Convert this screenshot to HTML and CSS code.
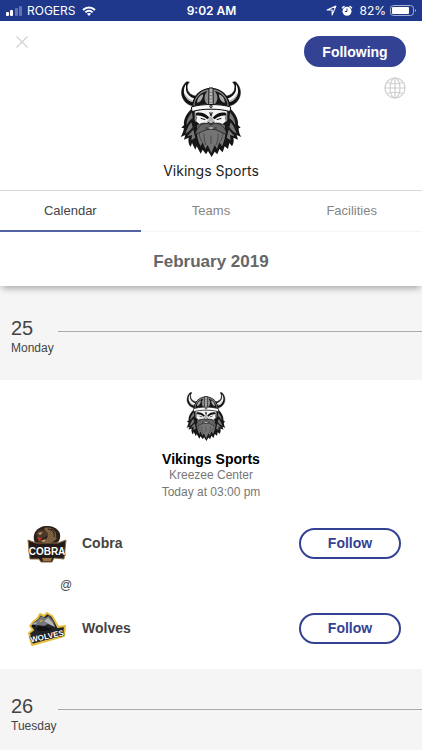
FILE: index.html
```
<!DOCTYPE html>
<html lang="en">

<head>
    <meta charset="UTF-8">
    <meta name="viewport" content="width=device-width, initial-scale=1.0">
    <title>Vikings Sports</title>
    <link rel="stylesheet" href="styles.css">
</head>

<body>
    <svg class="sprite" aria-hidden="true">
        <symbol id="viking" viewBox="60 26 186 228">
            <!-- hair and beard -->
            <path fill="#161616" d="M96 108C80 124 70 140 72 158L64 166L72 168C70 178 66 188 62 194L76 188L72 202L86 196C84 206 86 216 92 224L96 212L106 232L110 222L122 244L128 232L138 246L144 236L155 254L164 238L172 246L178 230L188 240L194 222L204 230L208 212L216 222C222 212 222 204 220 196L234 202L230 188L244 194C238 186 236 176 236 168L242 166L234 158C236 140 226 124 210 108Z" />
            <path fill="#777" d="M96 120C84 134 80 146 80 158C86 150 90 142 98 138ZM210 120C222 134 226 146 226 158C220 150 216 142 208 138ZM94 150C82 164 80 176 76 184C88 178 94 170 98 164ZM212 150C224 164 226 176 230 184C218 178 212 170 208 164ZM100 172L82 192L96 188L94 204L106 196ZM206 172L224 192L210 188L212 204L200 196Z" />
            <path fill="#747474" d="M112 158C108 182 112 202 122 222L128 210L136 230L143 218L154 242L164 218L171 230L178 210L186 222C196 202 198 182 194 158C178 150 162 154 153 160C144 154 128 150 112 158Z" />
            <g fill="none" stroke="#333" stroke-width="2">
                <path d="M118 178C116 188 120 198 126 208M132 184C130 194 134 208 138 218M188 178C190 188 186 198 180 208M174 184C176 194 172 208 168 218M153 190V214M104 162L90 180M202 162L216 180" />
            </g>
            <!-- face -->
            <path fill="#f4f4f4" stroke="#111" stroke-width="2" d="M104 116C120 108 186 108 202 116L200 146L188 156C176 150 164 152 153 158C142 152 130 150 118 156L106 146Z" />
            <path fill="#111" d="M108 122C122 118 138 124 148 136L142 141C130 131 118 128 108 130ZM198 122C184 118 168 124 158 136L164 141C176 131 188 128 198 130Z" />
            <path fill="#8a8a8a" d="M104 118L112 136L108 148L104 144ZM202 118L194 136L198 148L202 144Z" />
            <path fill="#b5b5b5" d="M149 118H157V134L164 148L158 155H148L142 148L149 134Z" />
            <path fill="none" stroke="#111" stroke-width="3" d="M122 138L136 142M184 138L170 142M142 149L153 155L164 149M149 120L153 130L157 120" />
            <path fill="#666" stroke="#111" stroke-width="2" d="M153 158C142 150 124 152 114 166C108 174 108 180 104 186C118 184 130 174 140 172L153 170L166 172C176 174 188 184 202 186C198 180 198 174 192 166C182 152 164 150 153 158Z" />
            <path fill="#eee" stroke="#111" stroke-width="2" d="M137 167Q153 160 169 167Q153 174 137 167Z" />
            <!-- horns -->
            <g stroke="#111" stroke-width="2" stroke-linejoin="round">
                <path fill="#111" d="M80 28C62 44 62 66 70 80C76 92 86 98 98 100L114 72C96 72 84 62 82 50C80 42 82 34 88 30Z" />
                <path fill="#111" d="M226 28C244 44 244 66 236 80C230 92 220 98 208 100L192 72C210 72 222 62 224 50C226 42 224 34 218 30Z" />
            </g>
            <path fill="#f5f5f5" d="M78 36C70 48 70 62 76 72C82 84 90 88 98 89L104 78C92 76 80 66 78 52Z" />
            <path fill="#f5f5f5" d="M228 36C236 48 236 62 230 72C224 84 216 88 208 89L202 78C214 76 226 66 228 52Z" />
            <path fill="none" stroke="#aaa" stroke-width="4" d="M75 68C80 78 88 84 98 86M231 68C226 78 218 84 208 86" />
            <!-- helmet -->
            <path fill="#8b8b8b" stroke="#111" stroke-width="4" d="M98 106C98 72 120 50 153 48C186 50 208 72 208 106L153 98Z" />
            <path fill="#161616" d="M104 92C110 72 124 60 142 56C130 70 132 86 142 96C128 97 114 99 104 101ZM202 92C196 72 182 60 164 56C176 70 174 86 164 96C178 97 192 99 202 101Z" />
            <path fill="#a8a8a8" d="M112 92C110 80 120 68 130 66C128 78 124 88 112 92ZM194 92C196 80 186 68 176 66C178 78 182 88 194 92Z" />
            <path fill="#b9b9b9" stroke="#111" stroke-width="3" d="M147 47H159L160 102H146Z" />
            <path fill="none" stroke="#555" stroke-width="2" d="M149 60H157M149 70H157M149 80H157M149 90H157" />
            <path fill="#fafafa" stroke="#111" stroke-width="3" d="M94 104C124 94 182 94 212 104L210 118C184 108 122 108 96 118Z" />
            <circle cx="153" cy="102" r="4" fill="#888" stroke="#111" stroke-width="2" />
        </symbol>
    </svg>

    <div class="status-bar">
        <div class="status-left">
            <svg class="signal" viewBox="0 0 17 10" fill="#fff">
                <rect x="0" y="6" width="3" height="4" rx="1" />
                <rect x="4" y="4" width="3" height="6" rx="1" />
                <rect x="9" y="2" width="3" height="8" rx="1" opacity=".3" />
                <rect x="13" y="0" width="3" height="10" rx="1" opacity=".3" />
            </svg>
            <span>ROGERS</span>
            <svg class="wifi" viewBox="0 0 14 10" fill="none" stroke="#fff" stroke-width="2">
                <path d="M1 4C4.500 .5 9.500 .5 13 4M3.400 6.400C5.500 4.300 8.500 4.300 10.600 6.400" />
                <path d="M7 10L4.900 7.800C6 6.800 8 6.800 9.100 7.800Z" fill="#fff" stroke="none" />
            </svg>
        </div>
        <div class="status-time">9:02 AM</div>
        <div class="status-right">
            <svg class="location" viewBox="0 0 10 10" fill="none" stroke="#fff" stroke-linejoin="round">
                <path d="M9 1L5.600 9V4.500H1Z" />
            </svg>
            <svg class="alarm" viewBox="0 0 12 12">
                <circle cx="6" cy="6.300" r="4.500" fill="#fff" />
                <path d="M1.500 2.800L3 1.500M10.500 2.800L9 1.500" stroke="#fff" stroke-width="1.500" stroke-linecap="round" />
                <path d="M6 3.500V6.500H3.800" fill="none" stroke="#1f388b" />
            </svg>
            <span>82%</span>
            <svg class="battery" viewBox="0 0 27 12">
                <rect x=".5" y=".5" width="23" height="10" rx="3" fill="none" stroke="#a7b1d4" />
                <rect x="2" y="2" width="17" height="7" rx="1" fill="#fff" />
                <path d="M25 4Q27 5.500 25 7Z" fill="#a7b1d4" />
            </svg>
        </div>
    </div>

    <header class="header">
        <button class="icon-btn close" type="button" aria-label="Close">
            <svg viewBox="0 0 12 12" fill="none" stroke="#d2d2d2" stroke-width="1.300">
                <path d="M.5 .5L11.500 11.500M11.500 .5L.5 11.500" />
            </svg>
        </button>
        <div class="team">
            <svg class="team-logo" role="img" aria-label="Vikings Sports logo"><use href="#viking" /></svg>
            <h1>Vikings Sports</h1>
        </div>
        <div class="actions">
            <button class="btn btn-filled" type="button">Following</button>
            <button class="icon-btn globe" type="button" aria-label="Website">
                <svg viewBox="0 0 22 22" fill="none" stroke="#cecece" stroke-width="1.200">
                    <circle cx="11" cy="11" r="10" />
                    <ellipse cx="11" cy="11" rx="5" ry="10" />
                    <path d="M11 1V21M1 11H21M3 5.500Q11 8 19 5.500M3 16.500Q11 14 19 16.500" />
                </svg>
            </button>
        </div>
    </header>

    <nav class="tabs">
        <a class="tab active" href="#calendar">Calendar</a>
        <a class="tab" href="#teams">Teams</a>
        <a class="tab" href="#facilities">Facilities</a>
    </nav>
    <h2 class="month">February 2019</h2>

    <main id="calendar">
        <section class="day">
            <div class="day-top">
                <span class="day-number">25</span>
                <span class="day-line"></span>
            </div>
            <div class="day-name">Monday</div>
        </section>

        <article class="game">
            <div class="game-info">
                <svg class="game-logo" role="img" aria-label="Vikings Sports logo"><use href="#viking" /></svg>
                <h3>Vikings Sports</h3>
                <p>Kreezee Center</p>
                <p>Today at 03:00 pm</p>
            </div>
            <div class="opponent">
                <svg class="opponent-logo" viewBox="0 0 40 40">
                    <path d="M8 20C4 11 10 3 20 3C29 3 36 9 32 18L28 22L14 22Z" fill="#2a211b" />
                    <path d="M17 5C25 3 31 8 30 15C27 20 20 21 15 19C21 17 22 12 19 10Z" fill="#7b6142" />
                    <path d="M9 11C10 7 13 6 17 7L21 10C20 14 15 16 11 16Z" fill="#4b3726" />
                    <path d="M11 10L16 9L13 12ZM13 18L19 16L17 19Z" fill="#d4a16b" />
                    <path d="M10 14L15 15L12 19Z" fill="#bb352b" />
                    <path d="M21 6C26 7 28 10 27 14M24 6C29 8 31 11 29 15" fill="none" stroke="#201914" />
                    <path d="M1 17L9 20H31L39 17L37 36L27 35L25 39H14L12 36L3 36Z" fill="#231b19" stroke="#8b6b43" />
                    <text class="cobra-text" x="20" y="32" text-anchor="middle">COBRA</text>
                    <path d="M15 35H25L24 38H16Z" fill="#9a7546" />
                </svg>
                <span class="opponent-name">Cobra</span>
                <button class="btn btn-outline" type="button">Follow</button>
            </div>
            <div class="versus">@</div>
            <div class="opponent">
                <svg class="opponent-logo" viewBox="0 0 40 40">
                    <path d="M3 18L6 14L11 10L13 6L17 8L20 5L25 8L28 13L31 19L38 18L37 28L19 33L5 37L2 25L6 22Z" fill="#222428" stroke="#e4bd3c" stroke-width="2" stroke-linejoin="round" />
                    <path d="M5 16L12 11L14 8L18 10L22 8L26 13L28 19L21 16L17 18L11 17L5 19Z" fill="#74777b" />
                    <path d="M17 13L21 10L25 14L28 19L22 16ZM5 16L10 14L9 16Z" fill="#b5b7b9" />
                    <path d="M5 17L9 17L8 19L5 19ZM12 18L20 19L25 22L13 23L9 22Z" fill="#111" />
                    <path d="M12 13L16 12L14 14Z" fill="#f0c73b" />
                    <text class="wolves-text" x="20" y="31" text-anchor="middle" transform="rotate(-12 20 28)">WOLVES</text>
                </svg>
                <span class="opponent-name">Wolves</span>
                <button class="btn btn-outline" type="button">Follow</button>
            </div>
        </article>

        <section class="day">
            <div class="day-top">
                <span class="day-number">26</span>
                <span class="day-line"></span>
            </div>
            <div class="day-name">Tuesday</div>
        </section>
    </main>
</body>

</html>
```
FILE: styles.css
```
* {
    box-sizing: border-box;
}

body {
    margin: 0;
    min-height: 100vh;
    background: #f5f5f5;
    color: #444;
    font-family: "Liberation Sans", Arial, sans-serif;
    font-size: 12px;
    overflow-x: hidden;
}

h1,
h2,
h3,
p {
    margin: 0;
}

svg {
    display: block;
    flex-shrink: 0;
}

.sprite {
    display: none;
}

/* Status bar */
.status-bar {
    display: grid;
    grid-template-columns: 1fr auto 1fr;
    align-items: center;
    height: 21px;
    padding: 0 5px 0 6px;
    background: #1f388b;
    color: #fff;
    font-family: Inter, sans-serif;
    font-size: 12px;
}

.status-left,
.status-right {
    display: flex;
    align-items: center;
    gap: 4px;
}

.status-right {
    justify-content: flex-end;
}

.status-right span {
    margin-left: 2px;
}

.status-time {
    font-weight: 600;
}

.signal {
    width: 17px;
    height: 10px;
}

.wifi {
    width: 14px;
    height: 10px;
    margin-left: 2px;
}

.location {
    width: 11px;
    height: 11px;
}

.alarm {
    width: 12px;
    height: 12px;
}

.battery {
    width: 27px;
    height: 12px;
}

/* Header */
.header {
    display: grid;
    grid-template-columns: 1fr auto 1fr;
    padding: 15px 16px 9px;
    background: #fff;
    border-bottom: 1px solid #d8d8d8;
}

.team {
    display: flex;
    flex-direction: column;
    align-items: center;
    padding-top: 45px;
}

.team-logo {
    width: 62px;
    height: 76px;
}

.team h1 {
    margin-top: 4px;
    color: #222;
    font-family: Inter, sans-serif;
    font-size: 14px;
    font-weight: 400;
    line-height: 20px;
}

.actions {
    display: flex;
    flex-direction: column;
    align-items: flex-end;
    gap: 10px;
}

.icon-btn {
    padding: 0;
    border: 0;
    background: none;
    cursor: pointer;
}

.close {
    width: 12px;
    height: 12px;
    justify-self: start;
}

.globe {
    width: 22px;
    height: 22px;
}

.btn {
    width: 102px;
    height: 31px;
    padding: 0;
    border: 2px solid #344294;
    border-radius: 16px;
    font-family: inherit;
    font-size: 14px;
    font-weight: bold;
    cursor: pointer;
}

.btn-filled {
    background: #344294;
    color: #fff;
}

.btn-outline {
    background: #fff;
    color: #344294;
}

/* Tabs */
.tabs {
    display: grid;
    grid-template-columns: repeat(3, 1fr);
    background: #fff;
}

.tab {
    height: 41px;
    border-bottom: 1px solid #f5f5f5;
    color: #858585;
    font-size: 13px;
    line-height: 40px;
    text-align: center;
    text-decoration: none;
}

.tab.active {
    border-bottom: 2px solid #5362a2;
    color: #444;
}

.month {
    margin-bottom: 5px;
    padding-top: 6px;
    background: #fff;
    box-shadow: 0 4px 7px -2px rgba(0, 0, 0, 0.35);
    color: #666;
    font-size: 17px;
    line-height: 48px;
    text-align: center;
}

/* Calendar */
.day {
    padding: 25px 0 24px 11px;
}

.day-top {
    display: flex;
    height: 24px;
}

.day-number {
    width: 47px;
    font-size: 20px;
    line-height: 24px;
}

.day-line {
    flex: 1;
    height: 16px;
    border-bottom: 1px solid #aaa;
}

.day-name {
    line-height: 16px;
}

.game {
    padding: 12px 21px 21px 27px;
    background: #fff;
}

.game-info {
    display: flex;
    flex-direction: column;
    align-items: center;
    margin: 0 -21px 22px -27px;
    color: #777;
    line-height: 17px;
}

.game-logo {
    width: 50px;
    height: 49px;
    padding-right: 10px;
}

.game-info h3 {
    margin-top: 10px;
    color: #000;
    font-size: 14px;
    line-height: 16px;
}

.opponent {
    display: flex;
    align-items: center;
    height: 40px;
}

.opponent-logo {
    width: 40px;
    height: 40px;
}

.opponent-name {
    flex: 1;
    margin-left: 15px;
    font-size: 14px;
    font-weight: bold;
}

.versus {
    padding-left: 33px;
    line-height: 45px;
}

.cobra-text,
.wolves-text {
    fill: #fff;
    stroke: #17120f;
    stroke-width: 1px;
    paint-order: stroke;
    font-weight: bold;
}

.cobra-text {
    font-size: 10px;
}

.wolves-text {
    font-size: 8px;
}
```
